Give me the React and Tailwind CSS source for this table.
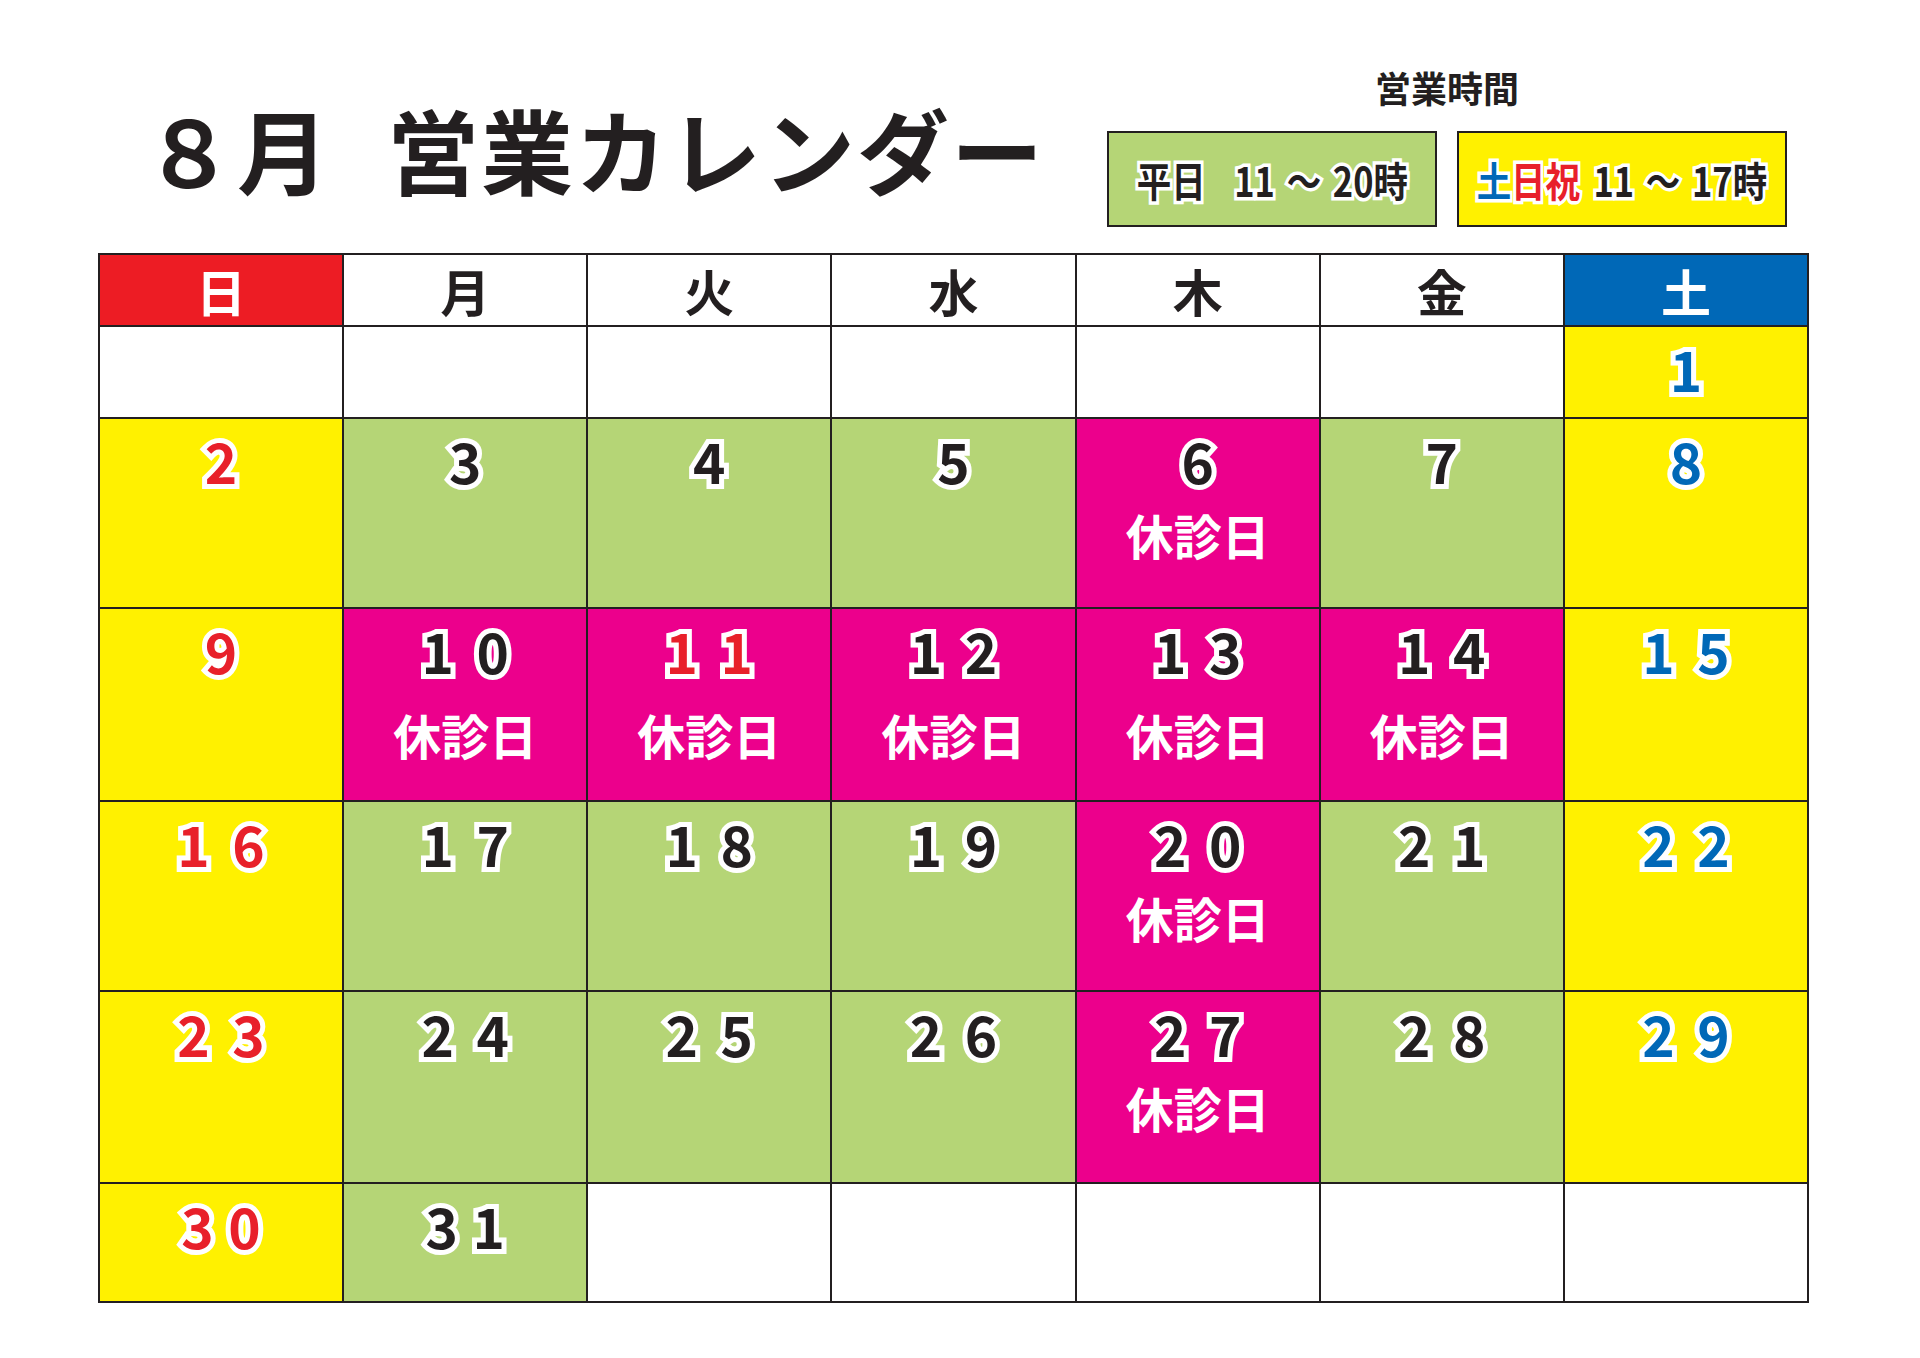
import React from 'react';

const RED = 'text-[#e8202a]';
const BLUE = 'text-[#0068b7]';
const INK = 'text-[#231f20]';

// cell fills
const Y = 'bg-[#fff100]';
const G = 'bg-[#b5d576]';
const M = 'bg-[#ec008c]';
const W = 'bg-white';

const weekdays = [
  { label: '日', cls: 'bg-[#ed1c24] text-white' },
  { label: '月', cls: 'bg-white text-[#231f20]' },
  { label: '火', cls: 'bg-white text-[#231f20]' },
  { label: '水', cls: 'bg-white text-[#231f20]' },
  { label: '木', cls: 'bg-white text-[#231f20]' },
  { label: '金', cls: 'bg-white text-[#231f20]' },
  { label: '土', cls: 'bg-[#0068b7] text-white' },
];

const closedDays = [6, 10, 11, 12, 13, 14, 20, 27];
const holidays = [11];

const buildRows = () => {
  const rows = [];
  let day = 1 - 6; // Aug 1 falls on Saturday
  for (let r = 0; r < 6; r++) {
    const row = [];
    for (let c = 0; c < 7; c++) {
      row.push(day >= 1 && day <= 31 ? day : null);
      day++;
    }
    rows.push(row);
  }
  return rows;
};

const rowHeights = ['h-[92px]', 'h-[190px]', 'h-[193px]', 'h-[190px]', 'h-[192px]', 'h-[119px]'];
const closedGap = ['mt-[22px]', 'mt-[22px]', 'mt-[32px]', 'mt-[22px]', 'mt-[22px]', 'mt-[22px]'];

const DayNumber = ({ day, col }) => {
  let color = INK;
  if (col === 0 || holidays.includes(day)) color = RED;
  else if (col === 6) color = BLUE;
  const digits = String(day).split('');
  const wide = day < 30;
  return (
    <div className={`flex justify-center text-[55px] leading-none font-bold ${color} [-webkit-text-stroke:10px_white] [paint-order:stroke_fill]`}>
      {digits.map((d, i) => (
        <span key={i} className={wide ? 'w-[55px] text-center' : 'w-[47px] text-center'}>{d}</span>
      ))}
    </div>
  );
};

const Cell = ({ day, col, row }) => {
  let bg = W;
  if (day) {
    if (closedDays.includes(day)) bg = M;
    else if (col === 0 || col === 6) bg = Y;
    else bg = G;
  }
  return (
    <div className={`${bg} border-r-2 border-b-2 border-[#231f20] flex flex-col items-center pt-[14px]`}>
      {day && <DayNumber day={day} col={col} />}
      {day && closedDays.includes(day) && (
        <div className={`${closedGap[row]} text-[48px] leading-none font-bold text-white`}>休診日</div>
      )}
    </div>
  );
};

const Hours = ({ from, to }) => (
  <>
    <span>{from}</span>
    <span className="mx-[14px]">～</span>
    <span>{to}時</span>
  </>
);

export default function App() {
  const rows = buildRows();
  return (
    <div className="w-[1920px] h-[1358px] bg-white font-['Noto_Sans_CJK_JP','Noto_Sans_CJK_SC',sans-serif] text-[#231f20]">
      {/* Title + business hours */}
      <div className="flex items-start h-[253px]">
        <h1 className="pl-[143px] pt-[102px] text-[92px] leading-none font-bold tracking-[2px]">
          ８月<span className="ml-[56px]">営業カレンダー</span>
        </h1>
        <div className="ml-auto mr-[133px] pt-[69px] flex flex-col items-center">
          <div className="text-[36px] leading-none font-bold">営業時間</div>
          <div className="mt-[26px] flex gap-[20px]">
            <div className="w-[330px] h-[96px] bg-[#b5d576] border-2 border-[#231f20] flex items-center justify-center">
              <span className="inline-block whitespace-nowrap scale-x-[0.84] text-[41px] leading-none font-bold [-webkit-text-stroke:7px_white] [paint-order:stroke_fill]">
                <span className="mr-[34px]">平日</span>
                <Hours from="11" to="20" />
              </span>
            </div>
            <div className="w-[330px] h-[96px] bg-[#fff100] border-2 border-[#231f20] flex items-center justify-center">
              <span className="inline-block whitespace-nowrap scale-x-[0.84] text-[41px] leading-none font-bold [-webkit-text-stroke:7px_white] [paint-order:stroke_fill]">
                <span className="text-[#0068b7]">土</span>
                <span className="text-[#e8202a] mr-[16px]">日祝</span>
                <Hours from="11" to="17" />
              </span>
            </div>
          </div>
        </div>
      </div>

      {/* Calendar grid */}
      <div className="ml-[98px] w-[1711px] border-t-2 border-l-2 border-[#231f20]">
        <div className="grid grid-cols-7 h-[72px]">
          {weekdays.map(w => (
            <div key={w.label} className={`${w.cls} border-r-2 border-b-2 border-[#231f20] flex items-center justify-center text-[50px] leading-none font-bold`}>
              {w.label}
            </div>
          ))}
        </div>
        {rows.map((row, r) => (
          <div key={r} className={`grid grid-cols-7 ${rowHeights[r]}`}>
            {row.map((day, c) => (
              <Cell key={c} day={day} col={c} row={r} />
            ))}
          </div>
        ))}
      </div>
    </div>
  );
}
